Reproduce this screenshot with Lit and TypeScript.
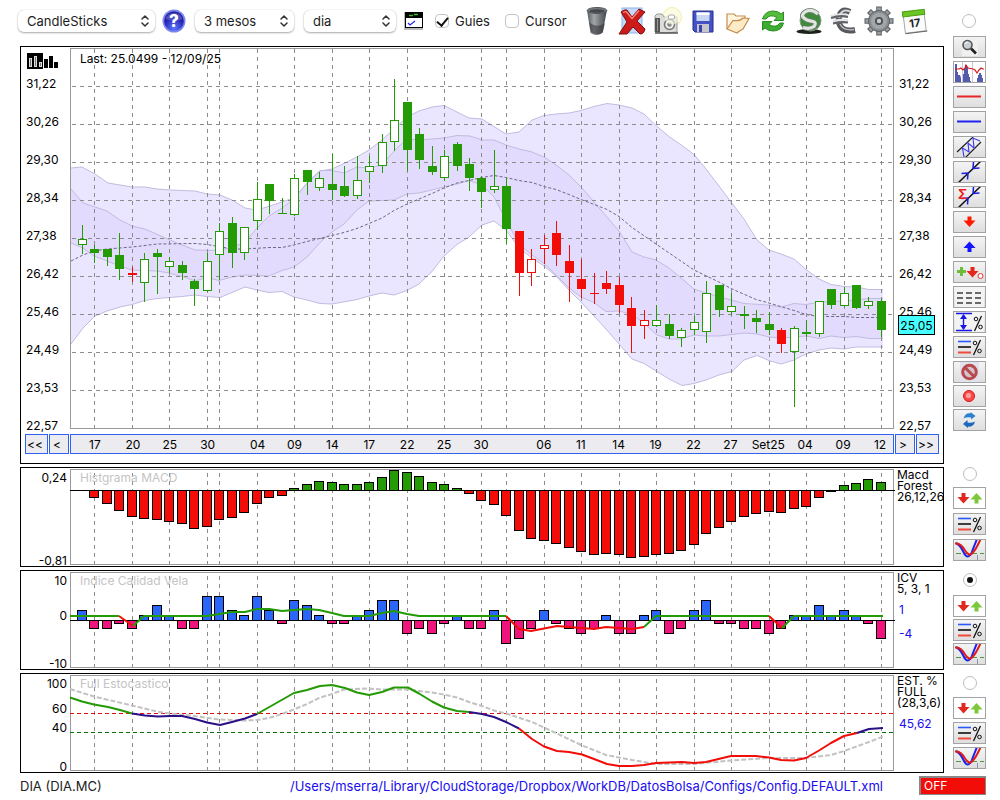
import { LitElement, html, svg, css } from "lit";
import { customElement, state } from "lit/decorators.js";

/* ---------- chart data ---------- */

type Kind = "g" | "G" | "r" | "R"; // capital = filled body
type Candle = [number, number, number, number, Kind]; // high, body top, body bottom, low
type Pt = [number, number];

const X0 = 70;
const WIDTH = 824;
const cx = (k: number) => Math.floor(82.5 + 12.484 * k);
const pct = (x: number) => `${(((x - X0) / WIDTH) * 100).toFixed(3)}%`;

const CANDLES: Candle[] = [
  [225, 239, 245, 254, "g"], [245, 249, 253, 263, "G"], [249, 249, 257, 266, "G"], [233, 255, 269, 280, "G"],
  [267, 273, 275, 282, "R"], [253, 259, 283, 302, "g"], [249, 253, 257, 294, "G"], [257, 261, 267, 273, "g"],
  [261, 265, 273, 280, "G"], [279, 281, 289, 306, "G"], [253, 261, 291, 292, "g"], [223, 231, 255, 280, "g"],
  [217, 223, 253, 268, "G"], [227, 227, 253, 260, "g"], [182, 199, 221, 230, "g"], [184, 184, 201, 214, "G"],
  [198, 213, 214, 214, "G"], [174, 178, 215, 216, "g"], [170, 170, 182, 195, "G"], [172, 178, 188, 191, "g"],
  [154, 184, 190, 200, "G"], [166, 186, 196, 197, "G"], [156, 180, 196, 199, "g"], [156, 166, 172, 183, "g"],
  [134, 142, 166, 173, "g"], [79, 120, 142, 151, "g"], [102, 102, 150, 171, "G"], [128, 134, 160, 169, "G"],
  [146, 166, 172, 175, "G"], [150, 156, 178, 181, "g"], [142, 144, 166, 171, "G"], [158, 164, 178, 191, "G"],
  [176, 178, 192, 208, "G"], [150, 186, 190, 193, "g"], [178, 186, 229, 244, "G"], [231, 231, 273, 296, "R"],
  [249, 259, 273, 286, "r"], [235, 245, 249, 264, "r"], [221, 233, 255, 266, "R"], [245, 261, 273, 302, "R"],
  [259, 279, 289, 298, "R"], [273, 293, 294, 304, "R"], [271, 283, 289, 294, "R"], [277, 285, 305, 313, "R"],
  [297, 308, 326, 353, "R"], [310, 320, 326, 339, "r"], [305, 320, 326, 327, "g"], [314, 324, 336, 339, "G"],
  [328, 330, 338, 347, "g"], [316, 322, 330, 335, "g"], [281, 293, 332, 343, "g"], [285, 285, 310, 317, "G"],
  [293, 306, 312, 315, "g"], [306, 314, 316, 329, "G"], [310, 318, 322, 333, "G"], [312, 324, 330, 335, "G"],
  [328, 330, 344, 353, "R"], [326, 328, 352, 407, "g"], [320, 332, 334, 337, "G"], [301, 301, 334, 337, "g"],
  [289, 289, 305, 309, "G"], [287, 293, 306, 307, "g"], [285, 285, 308, 309, "G"], [297, 301, 306, 309, "g"],
  [299, 301, 330, 337, "G"],
];

const DATES: [number, string][] = [
  [1, "17"], [4, "20"], [7, "25"], [10, "30"], [11, ""], [14, "04"], [17, "09"], [20, "14"], [23, "17"], [26, "22"],
  [29, "25"], [32, "30"], [34, ""], [37, "06"], [40, "11"], [43, "14"], [46, "19"], [49, "22"], [52, "27"],
  [55, "Set25"], [58, "04"], [61, "09"], [64, "12"],
];

const PRICES = ["31,22", "30,26", "29,30", "28,34", "27,38", "26,42", "25,46", "24,49", "23,53", "22,57"];

const OUTER_TOP: Pt[] = [[71, 168], [82, 167], [95, 174], [108, 183], [120, 185], [132, 187], [145, 187], [157, 189], [170, 190], [195, 191], [207, 194], [220, 195], [232, 200], [245, 208], [257, 210], [270, 206], [282, 202], [294, 198], [307, 183], [320, 171], [332, 169], [345, 163], [357, 157], [369, 150], [382, 140], [395, 128], [407, 117], [419, 111], [432, 107], [444, 105.5], [457, 112], [469, 118], [482, 119], [494, 126.5], [506, 134], [519, 132], [532, 120], [544, 115.5], [556, 114], [569, 113], [581, 110.5], [594, 106.5], [607, 103.5], [619, 105], [632, 108], [644, 114], [656, 125.5], [669, 136.5], [682, 145.5], [694, 154.5], [706, 169], [719, 186], [731, 202], [744, 219], [757, 240], [769, 250], [781, 254], [794, 259], [806, 269.5], [819, 279], [831, 284.5], [844, 286.5], [856, 287], [869, 289.5], [883, 289.5]];
const INNER_TOP: Pt[] = [[71, 189], [83, 203], [95, 207], [107, 211], [120, 220], [132, 226], [145, 229], [170, 240], [182, 245], [195, 250], [220, 250.5], [232, 247], [244, 243], [257, 228], [269, 216], [282, 208], [294, 199], [307, 183], [320, 170.5], [332, 170.5], [344, 173], [357, 167], [369, 168], [382, 165], [394, 151], [407, 139], [419, 140], [432, 139], [444, 138], [457, 135.5], [470, 136], [482, 140], [494, 140], [506, 145], [519, 149], [532, 152], [544, 157], [556, 165], [569, 175], [582, 188], [594, 202], [606, 216], [619, 231], [632, 252], [644, 257], [656, 260], [669, 268], [681, 278], [694, 289], [706, 293], [731, 300], [744, 303.5], [769, 305], [781, 307], [794, 303.5], [806, 304.5], [819, 302], [844, 301], [869, 298.5], [883, 298.5]];
const INNER_BOTTOM: Pt[] = [[71, 243], [83, 248], [94, 256], [107, 261], [120, 266], [132, 270], [157, 271], [169, 273], [182, 276.5], [195, 281], [207, 277.5], [219, 280.5], [232, 277], [245, 275], [269, 276], [282, 270.5], [294, 267], [307, 257], [320, 242.5], [332, 232], [344, 224], [357, 210], [369, 201], [394, 200], [407, 194], [419, 193], [444, 187], [457, 184], [469, 180.5], [482, 185], [494, 197], [506, 220], [519, 244], [532, 255], [544, 263.5], [556, 275], [569, 288], [581, 297], [594, 302.5], [606, 311.5], [619, 311], [631, 314], [644, 323], [656, 334.5], [669, 339], [681, 339], [694, 335], [706, 336], [719, 336], [744, 333], [757, 334], [769, 337], [781, 338], [806, 336], [819, 338.5], [831, 336], [844, 337.5], [856, 336.5], [869, 338.5], [883, 338.5]];
const OUTER_BOTTOM: Pt[] = [[71, 344], [83, 328], [95, 316], [107, 311], [120, 307], [132, 304.5], [145, 300.5], [157, 298.5], [182, 296.5], [195, 295], [207, 296.5], [220, 297.5], [232, 292.5], [245, 287], [257, 290], [269, 292.5], [282, 291.5], [294, 297], [307, 300], [320, 303.5], [332, 304], [357, 299.5], [369, 296], [382, 293], [394, 295], [407, 290.5], [419, 284], [432, 271.5], [444, 256], [457, 244.5], [469, 237], [482, 225], [494, 221], [506, 230], [519, 248], [532, 258], [544, 266], [556, 276], [569, 290], [581, 302], [594, 316], [606, 329], [619, 344], [632, 359], [644, 363.5], [656, 371], [669, 379], [682, 385.5], [694, 383.5], [706, 380], [719, 375], [732, 371.5], [744, 360], [757, 355.5], [769, 360.5], [781, 364], [794, 360], [806, 354], [819, 350], [831, 348], [844, 349], [856, 347], [883, 347]];
const MID: Pt[] = [[71, 261], [83, 255], [94, 251], [107, 249], [132, 247], [145, 245.5], [157, 244], [195, 243.5], [207, 244.5], [219, 246.5], [232, 249], [245, 249], [269, 247.5], [282, 247.5], [294, 245], [307, 241.5], [332, 235.5], [344, 232.5], [357, 228.5], [369, 223.5], [382, 218], [394, 210.5], [407, 204], [419, 199], [432, 193.5], [444, 188], [457, 183], [469, 180.5], [482, 177.5], [494, 175.5], [506, 177.5], [519, 180.5], [532, 182.5], [544, 186.5], [556, 189.5], [569, 194.5], [581, 199.5], [606, 209], [619, 216.5], [632, 227.5], [656, 244], [694, 270], [719, 282], [731, 288.5], [756, 299.5], [769, 303], [794, 310.5], [806, 314.5], [819, 316.5], [844, 316.5], [857, 317.5], [883, 317.5]];

/* distance of each MACD bar from the zero line, positive is below it */
const MACD = [0, 8, 14, 21, 27, 29, 30, 32, 34, 39, 37, 30, 28, 23, 14, 8, 6, -2, -6, -9, -8, -6, -6, -8, -13, -20, -18, -14, -8, -6, -2, 4, 11, 15, 26, 41, 49, 51, 54, 58, 62, 65, 64, 65, 68, 67, 65, 64, 61, 55, 44, 38, 32, 27, 24, 22, 23, 19, 17, 8, 2, -5, -7, -11, -8];
const ICV = [2, -2, -2, -1, -2, 1, 3, 1, -2, -2, 5, 5, 2, 1, 5, 2, -1, 4, 3, 1, -1, -1, 1, 2, 4, 4, -3, -2, -3, -1, 1, -2, -2, 2, -5, -4, -2, 2, -1, -2, -3, -2, 1, -3, -3, 1, 2, -3, -2, 2, 4, -1, -1, -2, -2, -3, -2, 1, 1, 3, 1, 2, 1, -1, -4];

const GREEN = "#249a05", RED = "#f20d08", INDIGO = "#2b1088";
const ICV_LINE: [string, Pt[]][] = [
  [GREEN, [[70, 616], [119, 616]]],
  [RED, [[119, 616], [133, 626]]],
  [GREEN, [[133, 626], [144, 616], [207, 616], [219, 614], [232, 612], [245, 612], [257, 609], [269, 609], [282, 611], [294, 610], [307, 609], [319, 610], [332, 613], [344, 616], [369, 616], [382, 613], [394, 611], [407, 614], [419, 616], [506, 616]]],
  [RED, [[506, 616], [519, 629], [531, 631], [557, 626], [569, 627], [594, 629], [606, 627], [632, 629], [644, 627]]],
  [GREEN, [[644, 627], [656, 616], [769, 616]]],
  [RED, [[769, 616], [782, 628]]],
  [GREEN, [[782, 628], [794, 616], [883, 616]]],
];
const STOCH_LINE: [string, Pt[]][] = [
  [GREEN, [[70, 697.5], [82, 701.5], [94, 704.5], [108, 707], [120, 710], [132, 713.5]]],
  [INDIGO, [[132, 713.5], [145, 715.5], [158, 716.5], [170, 716], [182, 716], [195, 719], [207, 722.5], [220, 725], [232, 722], [245, 718.5], [257, 714]]],
  [GREEN, [[257, 714], [294, 693], [307, 690], [320, 686], [332, 685], [345, 688], [357, 692.5], [369, 695], [382, 692], [394, 687.5], [408, 687.5], [419, 693.5], [432, 701.5], [444, 707.5], [457, 711], [469, 712]]],
  [INDIGO, [[469, 712], [482, 714], [494, 717], [506, 722], [519, 728.5]]],
  [RED, [[519, 728.5], [532, 739], [544, 746.5], [557, 751], [569, 752], [582, 754.5], [594, 759], [607, 764], [619, 766], [632, 766], [644, 765], [656, 763], [682, 762], [694, 763], [706, 762], [731, 756], [756, 756], [769, 757.5], [781, 760], [794, 760.5], [806, 758], [819, 750.5], [831, 743], [844, 736], [857, 733]]],
  [INDIGO, [[857, 733], [869, 729], [883, 728]]],
];
const STOCH_SLOW: Pt[] = [[70, 689], [94, 696.5], [132, 705.5], [157, 711.5], [170, 713.5], [195, 716], [219, 719.5], [244, 720.5], [257, 720], [269, 718], [282, 714], [295, 709], [307, 704], [319, 698], [332, 694], [344, 689.5], [369, 688.5], [382, 689.5], [407, 689.5], [432, 692.5], [444, 694.5], [457, 697.5], [469, 702], [482, 706], [494, 710.5], [506, 713.5], [532, 722], [557, 733.5], [581, 745], [606, 755], [632, 760], [656, 764], [694, 764], [731, 760.5], [769, 758], [806, 758], [831, 755], [844, 751], [869, 742], [883, 736.5]];

const pts = (p: Pt[]) => p.map((q) => q.join(",")).join(" ");
const area = (a: Pt[], b: Pt[]) => pts([...a, ...[...b].reverse()]);

const columns = (top: number, bottom: number) =>
  DATES.map(([k]) => svg`<line x1=${cx(k) + 0.5} x2=${cx(k) + 0.5} y1=${top} y2=${bottom} stroke="#8c8c8c" stroke-dasharray="4 4"/>`);

const frame = (top: number, height: number) =>
  svg`<rect x="70.5" y=${top + 0.5} width="823" height=${height - 1} fill="none" stroke="#999"/>`;

const bar = (k: number, top: number, bottom: number, color: string) => svg`
  <rect x=${cx(k) - 5} y=${top} width="10" height=${bottom - top} fill="#000"/>
  ${bottom - top > 2 ? svg`<rect x=${cx(k) - 4} y=${top + 1} width="8" height=${bottom - top - 2} fill=${color}/>` : ""}`;

const candle = ([hi, top, bot, lo, kind]: Candle, k: number) => {
  const color = kind.toLowerCase() === "g" ? GREEN : RED;
  const x = cx(k);
  return svg`
    <rect x=${x} y=${hi} width="1" height=${lo - hi} fill=${color}/>
    <rect x=${x - 4} y=${top} width="9" height=${bot - top} fill=${color}/>
    ${kind === "g" || kind === "r" ? svg`<rect x=${x - 3} y=${top + 1} width="7" height=${bot - top - 2} fill="#fff"/>` : ""}`;
};

const trace = (runs: [string, Pt[]][]) =>
  runs.map(([c, p]) => svg`<polyline points=${pts(p)} fill="none" stroke=${c} stroke-width="2" stroke-linejoin="round"/>`);

/* ---------- small tool icons, drawn on a 31 x 20 field ---------- */

const percent = svg`<g fill="none" stroke="#111"><circle cx="21" cy="6" r="1.8"/><circle cx="25.500" cy="14" r="1.800"/><path d="M26.500 3 19.500 18" stroke-width="1.300"/></g>`;
const downArrow = (x: number, y: number, c: string) => svg`<path d="M${x - 2} ${y}h4v4h4l-6 6.500-6-6.500h4z" fill=${c}/>`;
const upArrow = (x: number, y: number, c: string) => svg`<path d="M${x - 2} ${y + 10.5}h4v-4h4l-6-6.500-6 6.500h4z" fill=${c}/>`;
const crossing = svg`
  <path d="M4.500 20.500 27 -1" stroke="#111" stroke-width="1.500"/>
  <path d="M7.500 11.500 14 11 13.500 17.500M25.500 6 19 6.500 19.500 0" fill="none" stroke="#1c1ce0" stroke-width="1.500"/>`;

const ICONS: Record<string, unknown> = {
  zoom: svg`<rect x="8" y="1" width="16" height="18" fill="#f0f0f0"/><path d="M17 11.500 22 16.500" stroke="#222" stroke-width="2.600"/><circle cx="13.500" cy="8" r="4.500" fill="#c9cfd2" stroke="#555" stroke-width="1.600"/><path d="M11 7a3 3 0 0 1 3-2" stroke="#fff" fill="none"/>`,
  histogram: svg`<rect x="-1" y="-1" width="33" height="22" fill="#fff"/><g fill="#525cab"><path d="M1 21V2h2v8h1v3h2l1 3v5z"/><path d="M8 21V15h1v-3h1V6h1V3h2v2h1v7h1v3h1v4h1v2z"/><path d="M23 21v-5h1v-3h1v-2h2v2h1v3h1v5z"/></g><path d="M8.500 0v20M18.500 0v20" stroke="#c4c8e0"/><path d="M1 7h4l2-1 2 2 2-2 1-3 2 3 5 1 2 1 2 3 2-3 2-2 2 1h1" fill="none" stroke="#d81818" stroke-width="1.200"/>`,
  redLine: svg`<path d="M3 9.500h24" stroke="#e8262a" stroke-width="2"/>`,
  blueLine: svg`<path d="M3 9.500h24" stroke="#2222f0" stroke-width="2"/>`,
  channel: svg`<path d="M3 15 19 0M11 21 27 5" stroke="#222" stroke-width="1.200"/><path d="M10 20 8.500 11 15 15 14 6 20 11 19 1 26 4" fill="none" stroke="#3a3af0" stroke-width="1.100"/>`,
  cross: crossing,
  sigma: svg`${crossing}<text x="4" y="12" font-size="13" font-weight="700" fill="#e22">Σ</text>`,
  down: downArrow(15.5, 4.5, "#ff1a00"),
  up: upArrow(15.5, 4.5, "#1414ff"),
  marks: svg`<path d="M3 9.500h9M7.500 5v9" stroke="#6fbb3c" stroke-width="3"/>${downArrow(18.5, 5, "#e6261c")}<circle cx="26.500" cy="14" r="2.500" fill="#fff" stroke="#e33"/>`,
  dashes: svg`<rect x="1" y="-1" width="29" height="22" fill="#f3f3f3"/><path d="M3 6h24M3 11h24M3 16h24" stroke="#3c3c3c" stroke-width="1.600" stroke-dasharray="6 3"/>`,
  range: svg`<rect x="1" y="-1" width="29" height="22" fill="#f3f3f3"/><path d="M2 1.500h16M2 18.500h16M9.500 3v14" stroke="#1616e6" stroke-width="1.400"/><path d="M9.500 2 13 7H6zM9.500 18 13 13H6z" fill="#1616e6"/><g transform="translate(1 1)">${percent}</g>`,
  levels: svg`<path d="M4 4.500h13" stroke="#2a58ff" stroke-width="1.600"/><path d="M4 10h13" stroke="#111" stroke-width="1.600"/><path d="M4 15.500h13" stroke="#f04a3a" stroke-width="2"/>${percent}`,
  forbid: svg`<rect x="6" y="0" width="19" height="20" fill="#e2e2ec"/><circle cx="15.500" cy="10" r="6.800" fill="#d3c4cc" stroke="#b8494d" stroke-width="3"/><path d="M11 5.500 20 14.500" stroke="#b8494d" stroke-width="3"/>`,
  record: svg`<circle cx="15" cy="10" r="5.500" fill="#f8484a" stroke="#d8181c"/><circle cx="14.500" cy="9.500" r="2.600" fill="#ff9c98"/>`,
  sync: svg`<path d="M9.500 8.500q2-6 7-5V2l5 4-4.500 3.500V7.500q-4-1-7.500 1z" fill="#2d7fd0"/><path d="M21 11.500q-1.500 6-7 5V18l-5-4 4.500-4v2.500q4 1 7.500-1z" fill="#1c67bd"/>`,
  swap: svg`<rect x="-1" y="-1" width="33" height="22" fill="#fff"/>${downArrow(9.5, 5, "#e0281e")}${upArrow(22.5, 5, "#7cc83a")}`,
  curves: svg`<path d="M2 13.500h28" stroke="#4a9a3a" stroke-dasharray="5 3"/><path d="M23.500 15v5" stroke="#8a94a8"/><path d="M2 3q4 2 7 8 3 7 6 5t4-7l4-10" fill="none" stroke="#2020e8" stroke-width="2"/><path d="M1 3.500q6-1 10 7 4 6 7 3 3-3 5-7l4-8" fill="none" stroke="#e01c1c" stroke-width="2"/>`,
};

const MAIN_TOOLS: [string, string][] = [
  ["zoom", "Zoom"], ["histogram", "Histograma"], ["redLine", "Resistencia"], ["blueLine", "Soporte"],
  ["channel", "Canal"], ["cross", "Tendencia"], ["sigma", "Regresión"], ["down", "Venta"], ["up", "Compra"],
  ["marks", "Marcas"], ["dashes", "Rejilla"], ["range", "Rango"], ["levels", "Niveles"],
];
const EDIT_TOOLS: [string, string][] = [["forbid", "Borrar"], ["record", "Grabar"], ["sync", "Actualizar"]];
const PANEL_TOOLS: [string, string][] = [["swap", "Mover"], ["levels", "Niveles"], ["curves", "Indicador"]];

/* ---------- toolbar pictures ---------- */

const ACTIONS: [string, unknown][] = [
  ["Papelera", svg`<path d="M5 4 8.500 27q5.500 4 12 0L25 4z" fill="url(#bin)"/><path d="M7 16q8 7 16 1l-2 9q-6 5-12 0z" fill="#2d3036" opacity=".55"/><ellipse cx="15" cy="4.500" rx="9.800" ry="3" fill="#777b80" stroke="#54575b"/><ellipse cx="15" cy="5" rx="7.500" ry="1.800" fill="#44474b"/>`],
  ["Eliminar", svg`<rect x="5" y="2" width="20" height="25" fill="#c5daf8" stroke="#90b4ea"/><path d="M4 6q4-3 6-2l5 7 7-8 6 3-8 9 8 8q-1 5-5 5l-7-7-6 7H2l8-12z" fill="#cc1b1b" stroke="#7c1010"/><path d="M6 6.500l3-1 6 7 7-8" stroke="#ff8a80" fill="none" stroke-width="1.300"/>`],
  ["Captura", svg`<circle cx="20" cy="11" r="9.500" fill="#fbfbe0" stroke="#f2efb0"/><path d="M3 10l2-2h5l2 3h13v15q-11 2-22 0z" fill="#dcdcda" stroke="#999"/><path d="M3 12h5v14H3z" fill="#555"/><path d="M5.500 13v12" stroke="#999"/><circle cx="17.500" cy="18.500" r="5" fill="#eee" stroke="#777" stroke-width="1.500"/><circle cx="17.500" cy="18.500" r="2.300" fill="#888"/><circle cx="20" cy="11" r="7.500" fill="#fdfde6" opacity=".6"/><rect x="16.500" y="9" width="6" height="4" rx="1" fill="#fff" stroke="#aaa"/><path d="M3 27h23" stroke="#555" stroke-width="1.500"/>`],
  ["Guardar", svg`<path d="M5 5h20v21H7l-2-2z" fill="#4450c6" stroke="#232d8c"/><rect x="8.500" y="6" width="13" height="9" fill="#c8d6f4"/><path d="M8.500 8h13" stroke="#fff" stroke-width="2"/><rect x="9" y="18" width="12" height="8" fill="#c6c6ca"/><rect x="11" y="19" width="3" height="7" fill="#3a44b0"/>`],
  ["Abrir", svg`<path d="M4 23V8h7l2 2h9v4" fill="#fff6e2" stroke="#c68d4c" stroke-width="1.200"/><path d="M4 23 10 14.500q7 1 10-2.500l6 .500-6 10.500q-4 2-6 4z" fill="#fdebc8" stroke="#c68d4c" stroke-width="1.200"/>`],
  ["Refrescar", svg`<path d="M4.500 13Q7 5 15 5q5 0 8 3l2.500-2v8.500H16l3-3q-7-4-11 1.500z" fill="#55bd3e" stroke="#2c8c24"/><path d="M25.500 17q-2 8-10.500 8-5 0-8-3l-2.500 2v-8.500H14l-3 3q7 4 11-1.500z" fill="#3dac30" stroke="#2c8c24"/>`],
  ["Dólar", svg`<ellipse cx="15" cy="25.500" rx="12.500" ry="2.500" fill="#1a221a"/><circle cx="16.500" cy="14.500" r="10.500" fill="#3d8b3a" stroke="#8b978c"/><path d="M24 8Q17 2 11 6t2 8q3 1 6 1.500 4 1 1 5-4 3-11 1" fill="none" stroke="#6d786e" stroke-width="4.800"/><path d="M24 8Q17 2 11 6t2 8q3 1 6 1.500 4 1 1 5-4 3-11 1" fill="none" stroke="#dfe6df" stroke-width="3.200"/>`],
  ["Euro", svg`<path d="M21 6Q11 1 9.500 14 11 27 26 24" fill="none" stroke="#55585c" stroke-width="6"/><path d="M21 5.500Q12 2 10 12" fill="none" stroke="#d4d4d8" stroke-width="2"/><path d="M11 18q3 7 14 5.500" fill="none" stroke="#b8b8bc" stroke-width="1.500"/><path d="M2 11q9-3 17-1M4 16q8-2 15-1" stroke="#e4e4e6" fill="none" stroke-width="4"/><path d="M2 12q9-3 17-1M4 17.500q8-2 15-1" stroke="#606368" fill="none" stroke-width="2.200"/>`],
  ["Configuración", svg`<g stroke="#5b6064" stroke-width="5.600"><path d="M15 .500v29M.500 15h29M5 5l20 20M25 5 5 25"/></g><g stroke="#9a9ea1" stroke-width="3.600"><path d="M15 1.500v27M1.500 15h27M5.800 5.800l18.400 18.400M24.200 5.800 5.800 24.200"/></g><circle cx="15" cy="15" r="10.500" fill="#8a8e91" stroke="#5b6064"/><circle cx="15" cy="15" r="8" fill="#a2a6a8"/><circle cx="15" cy="15" r="4" fill="#4c5053"/><circle cx="15" cy="15" r="2.200" fill="#c8cacc"/>`],
  ["Calendario", svg`<g transform="rotate(-7 15 15)"><path d="M4 6h21v20H4z" fill="#fbfbfb" stroke="#a8a8a8"/><path d="M3.500 4.500h22v5h-22z" fill="#6cc425" stroke="#4b9e12"/><path d="M4 26.500h22" stroke="#666"/><text x="14.500" y="21" text-anchor="middle" font-size="11" font-weight="700" fill="#222">17</text></g>`],
];

@customElement("app-root")
export class AppRoot extends LitElement {
  @state() private focus = "icv";

  static styles = css`
    :host { display: block; min-height: 100vh; background: #fff; color: #000; font: 12px/12px Inter, "Liberation Sans", sans-serif; }
    * { box-sizing: border-box; }
    svg { display: block; }
    button { font: inherit; color: inherit; margin: 0; cursor: pointer; }
    .toolbar { display: flex; align-items: center; height: 44px; padding: 0 24px 2px 18px; }
    .pick { position: relative; display: flex; height: 22px; }
    .pick select { appearance: none; width: 100%; height: 22px; border: 0; border-radius: 6px; padding: 0 20px 0 9px; background: #fff; color: #1d1d1d; font: 13px/20px Inter, "Liberation Sans", sans-serif; box-shadow: 0 0 1px #bbb, 0 1px 2px #aaa; }
    .pick svg { position: absolute; right: 6px; top: 5px; pointer-events: none; }
    .type { width: 137px; }
    .span { width: 99px; margin-left: 9px; }
    .unit { width: 92px; margin-left: 10px; }
    .plain { border: 0; padding: 0; background: none; display: flex; flex: none; }
    .help { margin-left: 7px; }
    .grid-toggle { margin-left: 8px; }
    .tick { display: flex; align-items: center; gap: 6px; margin-left: 11px; font-size: 13px; line-height: 16px; color: #1d1d1d; }
    .tick + .tick { margin-left: 15px; }
    .tick input { appearance: none; width: 14px; height: 14px; margin: 0; border: 1px solid #c4c4c4; border-radius: 4px; background: #fff; display: grid; place-items: center; }
    .tick input:checked::after { content: ""; width: 5px; height: 9px; margin-bottom: 2px; border: solid #111; border-width: 0 2px 2px 0; transform: rotate(40deg); }
    .actions { display: flex; flex: 1; justify-content: space-between; margin-left: 15px; max-width: 348px; }
    .radio { appearance: none; flex: none; width: 14px; height: 14px; margin: 0; border: 1px solid #bcbcbc; border-radius: 50%; background: #fff; display: grid; place-items: center; }
    .radio:checked::after { content: ""; width: 6px; height: 6px; border-radius: 50%; background: #111; }
    .toolbar .radio { margin-left: auto; }
    .board { display: grid; grid-template-columns: minmax(0, 1fr) 33px; column-gap: 9px; row-gap: 3px; padding: 2px 14px 0 20px; }
    .panel { display: grid; grid-template-columns: 49px minmax(0, 1fr) 49px; border: 1px solid #000; padding: 1px 0; overflow: hidden; }
    .price { padding-bottom: 9px; row-gap: 5px; }
    .plot { position: relative; }
    .graph { width: 100%; overflow: visible; }
    .tall { height: 381px; }
    .short { height: 96px; }
    .caption { position: absolute; left: 10px; top: 5px; white-space: nowrap; }
    .short .caption { top: 3px; color: #c4c4c4; }
    .axis { position: relative; }
    .scale { position: absolute; inset: 0; width: 100%; height: 100%; overflow: visible; }
    .logo { position: absolute; left: 6px; top: 5px; }
    .quote { position: absolute; left: 4px; top: 267px; width: 37px; height: 20px; border: 1px solid #000; background: #46ffff; line-height: 20px; text-align: center; }
    .nav { display: flex; gap: 1px; height: 20px; }
    .nav.back { justify-content: flex-end; padding-right: 1px; }
    .nav.next { padding-left: 1px; }
    .nav button, .days { border: 1px solid #2f62f0; background: #ebebf0; height: 20px; }
    .nav button { width: 20px; padding: 1px 0 0 3px; text-align: left; }
    .nav .far { width: 23px; padding-left: 1px; }
    .days svg { width: 100%; height: 18px; overflow: visible; }
    .note { padding-left: 3px; line-height: 11px; white-space: pre; }
    .values { margin: 4px 0 0 5px; line-height: 24px; color: #1a0df0; }
    .side { display: flex; flex-direction: column; align-items: center; gap: 3px; min-height: 0; }
    .side.top { margin-top: -10px; }
    .side .edit { display: flex; flex-direction: column; gap: 2px; }
    .side .radio { margin-bottom: 4px; }
    .side.macd-side { gap: 4px; }
    .macd-side .radio { margin-bottom: 2px; }
    .side.icv-side { gap: 2px; padding-top: 3px; }
    .icv-side .radio { margin-bottom: 6px; }
    .stoch-side { padding-top: 3px; }
    .tool { width: 33px; height: 22px; padding: 0; border: 1px solid #a3a3a3; background: linear-gradient(#f4f4f4, #dedede); overflow: hidden; flex: none; }
    .footer { display: grid; grid-template-columns: 1fr auto 67px; align-items: center; gap: 36px; padding: 3px 14px 0 20px; }
    .footer .name, .footer a { font-size: 13px; white-space: nowrap; }
    .footer .name { color: #222; }
    .footer a { color: #1a0df0; text-decoration: none; }
    .off { height: 19px; border: 1px solid #888; border-width: 2px 1px 1px 2px; background: #f20d08; color: #fff; text-align: left; padding: 0 0 0 3px; }
  `;

  private picker(cls: string, label: string, options: string[]) {
    return html`<span class="pick ${cls}">
      <select aria-label=${label}>${options.map((o) => html`<option>${o}</option>`)}</select>
      <svg width="8" height="12" viewBox="0 0 8 12" fill="none" stroke="#333" stroke-width="1.500" stroke-linecap="round" stroke-linejoin="round"><path d="M1 4 4 1l3 3M1 8l3 3 3-3"/></svg>
    </span>`;
  }

  private tool([icon, label]: [string, string]) {
    return html`<button class="tool" title=${label} aria-label=${label}>
      <svg width="31" height="20" viewBox="0 0 31 20">${ICONS[icon]}</svg>
    </button>`;
  }

  private radio(id: string, label: string) {
    return html`<input class="radio" type="radio" name="panel" aria-label=${label} .checked=${this.focus === id} @change=${() => (this.focus = id)} />`;
  }

  private scale(labels: [number, string][], anchor: "start" | "end") {
    const x = anchor === "end" ? 46 : 5;
    return html`<svg class="scale">${labels.map(([y, t]) => svg`<text x=${x} y=${y + 4} text-anchor=${anchor}>${t}</text>`)}</svg>`;
  }

  private indicator(id: string, top: number, title: string, axis: [number, string][], graph: unknown, note: string, values: string[]) {
    return html`
      <section class="panel" aria-label=${title}>
        <div class="axis">${this.scale(axis, "end")}</div>
        <div class="plot short">
          <span class="caption">${title}</span>
          <svg class="graph short" viewBox="70 ${top} 824 96" preserveAspectRatio="none">
            ${columns(top + 4, top + 97)}${frame(top, 96)}${graph}
          </svg>
        </div>
        <div>
          <div class="note">${note}</div>
          <div class="values">${values.map((v) => html`<div>${v}</div>`)}</div>
        </div>
      </section>
      <div class="side ${id}-side">${this.radio(id, title)}${PANEL_TOOLS.map((t) => this.tool(t))}</div>`;
  }

  render() {
    const prices = PRICES.map((p, i) => [36 + i * 38, p] as [number, string]);
    return html`
      <header class="toolbar">
        ${this.picker("type", "Tipo de gráfico", ["CandleSticks", "Barras", "Línea"])}
        <button class="plain help" aria-label="Ayuda">
          <svg width="24" height="24" viewBox="0 0 24 24"><defs><radialGradient id="q" cx=".5" cy=".85" r=".9"><stop offset="0" stop-color="#5d78ff"/><stop offset=".6" stop-color="#2420b0"/><stop offset="1" stop-color="#2a2a96"/></radialGradient></defs><circle cx="12" cy="12" r="11.500" fill="#7c86f0"/><circle cx="12" cy="12" r="9.800" fill="url(#q)"/><path d="M3.500 10a9 9 0 0 1 17 0q-8 3-17 0z" fill="#fff" opacity=".2"/><text x="12" y="18" text-anchor="middle" font-size="17" font-weight="800" fill="#fff">?</text></svg>
        </button>
        ${this.picker("span", "Periodo", ["3 mesos", "6 mesos", "1 any"])}
        ${this.picker("unit", "Unidad", ["dia", "setmana", "mes"])}
        <button class="plain grid-toggle" aria-label="Vista">
          <svg width="20" height="20" viewBox="0 0 20 20"><rect x="0" y="1" width="19" height="18" fill="#bbb"/><rect x="1" y="1" width="18" height="5" fill="#000"/><path d="M5 4.500h4M10 3.500h4" stroke="#35c020" stroke-width="1.500"/><rect x="1.500" y="6.500" width="17" height="10" fill="#fff" stroke="#000"/><path d="M4 12l2 2 5-4" fill="none" stroke="#22f" stroke-width="1.200"/></svg>
        </button>
        <label class="tick"><input type="checkbox" checked />Guies</label>
        <label class="tick"><input type="checkbox" />Cursor</label>
        <nav class="actions">
          ${ACTIONS.map(([label, art]) => html`<button class="plain" title=${label} aria-label=${label}>
            <svg width="30" height="30" viewBox="0 0 30 30"><defs><linearGradient id="bin"><stop offset="0" stop-color="#55585c"/><stop offset=".35" stop-color="#a3a6a8"/><stop offset="1" stop-color="#404347"/></linearGradient></defs>${art}</svg>
          </button>`)}
        </nav>
        ${this.radio("main", "Gráfico principal")}
      </header>

      <main class="board">
        <section class="panel price" aria-label="Cotización">
          <div class="axis">
            <svg class="logo" width="32" height="16" viewBox="0 0 32 16"><path d="M0 0h16v16H0z"/><g fill="#777" stroke="#ddd"><rect x="2.500" y="5.500" width="2" height="8"/><rect x="7.500" y="3.500" width="2" height="10"/><rect x="12.500" y="9.500" width="2" height="4"/></g><path d="M17 6h4v9h-4zM22 3h4v12h-4zM27 9h4v6h-4z"/></svg>
            ${this.scale(prices, "start")}
          </div>
          <div class="plot tall">
            <svg class="graph tall" viewBox="70 48 824 381" preserveAspectRatio="none">
              <polygon points=${area(OUTER_TOP, OUTER_BOTTOM)} fill="#ebe6ff"/>
              <polygon points=${area(INNER_TOP, INNER_BOTTOM)} fill="#e3dbfd"/>
              ${[OUTER_TOP, OUTER_BOTTOM, INNER_TOP, INNER_BOTTOM].map((b) => svg`<polyline points=${pts(b)} fill="none" stroke="#c2bbe0"/>`)}
              <polyline points=${pts(MID)} fill="none" stroke="#6f6884" stroke-dasharray="3 2"/>
              ${PRICES.slice(0, 9).map((_, i) => svg`<line x1="72" x2="896" y1=${86.5 + i * 38} y2=${86.5 + i * 38} stroke="#8c8c8c" stroke-dasharray="4 4"/>`)}
              ${columns(49, 431)}${frame(48, 381)}
              ${CANDLES.map(candle)}
            </svg>
            <span class="caption">Last: 25.0499 - 12/09/25</span>
          </div>
          <div class="axis">${this.scale(prices, "start")}<output class="quote">25,05</output></div>
          <div class="nav back"><button class="far">&lt;&lt;</button><button>&lt;</button></div>
          <div class="days"><svg>${DATES.map(([k, d]) => svg`<text x=${pct(cx(k))} y="14" text-anchor="middle">${d}</text>`)}</svg></div>
          <div class="nav next"><button>&gt;</button><button class="far">&gt;&gt;</button></div>
        </section>
        <div class="side top">
          ${MAIN_TOOLS.map((t) => this.tool(t))}
          <div class="edit">${EDIT_TOOLS.map((t) => this.tool(t))}</div>
        </div>

        ${this.indicator("macd", 469, "Histgrama MACD", [[9, "0,24"], [92, "-0,81"]], svg`
          <line x1="70" x2="895" y1="490.500" y2="490.500" stroke="#000"/>
          ${MACD.map((v, k) => (v > 0 ? bar(k, 490, 490 + v, RED) : v < 0 ? bar(k, 490 + v, 491, GREEN) : ""))}`,
          "Macd\nForest\n26,12,26", [])}

        ${this.indicator("icv", 572, "Indice Calidad Vela", [[9, "10"], [44, "0"], [92, "-10"]], svg`
          ${ICV.map((v, k) => (v > 0 ? bar(k, 620 - Math.ceil(4.8 * v), 621, "#2a66fa") : bar(k, 620, 620 + Math.floor(-4.8 * v), "#f0147c")))}
          <line x1="70" x2="895" y1="620.500" y2="620.500" stroke="#000"/>
          ${trace(ICV_LINE)}`,
          "ICV\n5, 3, 1", ["1", "-4"])}

        ${this.indicator("stoch", 675, "Full Estocastico", [[9, "100"], [34, "60"], [53, "40"], [92, "0"]], svg`
          <line x1="70" x2="895" y1="713.500" y2="713.500" stroke="#e01010" stroke-dasharray="4 3"/>
          <line x1="70" x2="895" y1="732.500" y2="732.500" stroke="#0a700a" stroke-dasharray="4 3"/>
          <polyline points=${pts(STOCH_SLOW)} fill="none" stroke="#c2c2c2" stroke-width="2" stroke-dasharray="5 2"/>
          ${trace(STOCH_LINE)}`,
          "EST. %\nFULL\n(28,3,6)", ["45,62"])}
      </main>

      <footer class="footer">
        <span class="name">DIA (DIA.MC)</span>
        <a href="#config">/Users/mserra/Library/CloudStorage/Dropbox/WorkDB/DatosBolsa/Configs/Config.DEFAULT.xml</a>
        <button class="off">OFF</button>
      </footer>`;
  }
}
